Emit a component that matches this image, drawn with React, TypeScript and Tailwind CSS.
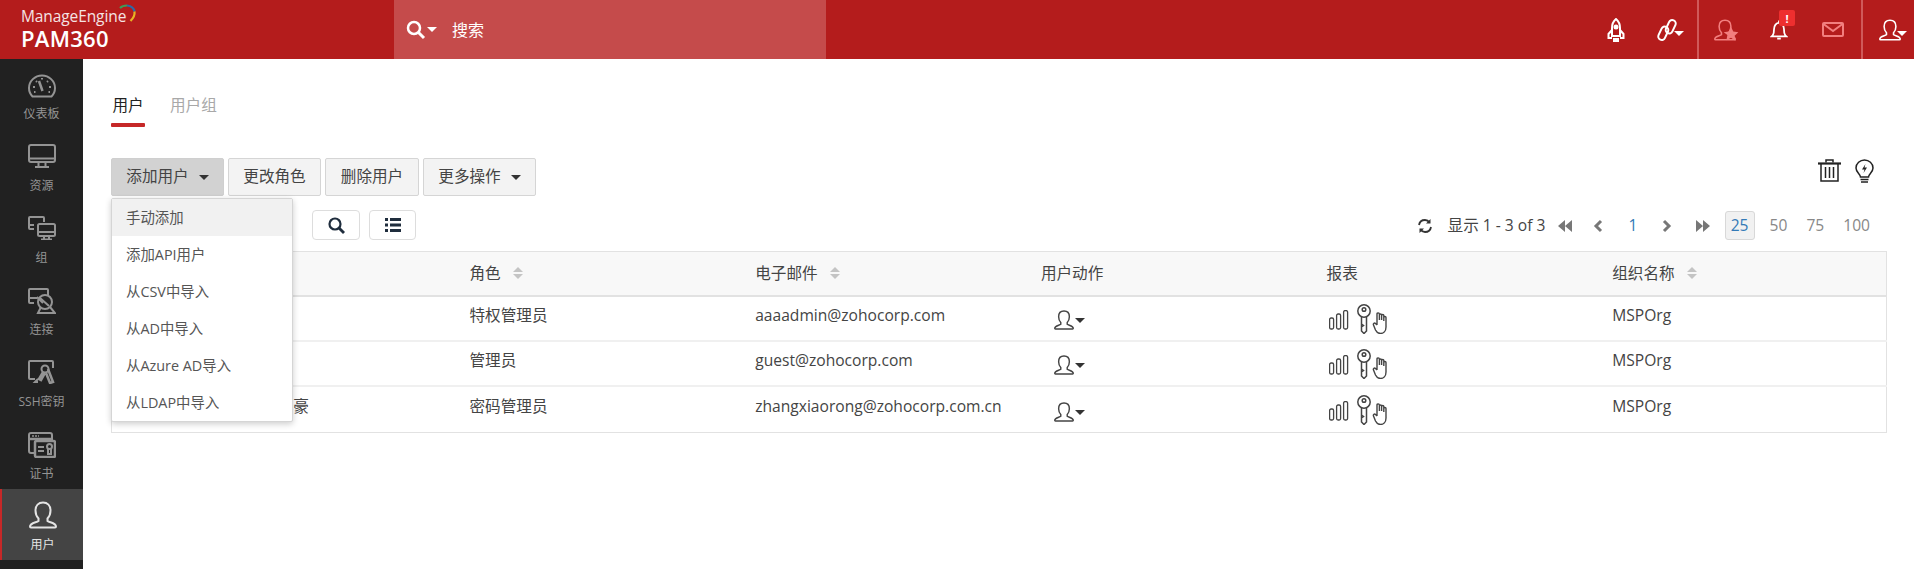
const FONT = "font-['Open_Sans','Noto_Sans_CJK_SC',sans-serif]";

function Gauge() {
  return (
    <svg width="28" height="24" viewBox="0 0 28 24" fill="none" stroke="currentColor" strokeWidth="2">
      <path d="M4.500 22.500h19c2-2 3.500-5 3.500-8.500C27 7 21 1.500 14 1.500S1 7 1 14c0 3.500 1.500 6.500 3.500 8.500z" />
      <path d="M11 7l3.500 10" strokeWidth="2.500" />
      <path d="M5 13h2M21 13h2M8 7l1 1M20 7l-1 1M14 4v1.500M6 18h1.500M20.500 18H22" />
    </svg>
  );
}

function Monitor() {
  return (
    <svg width="28" height="24" viewBox="0 0 28 24" fill="none" stroke="currentColor" strokeWidth="2">
      <rect x="1" y="1" width="26" height="17" rx="2" />
      <path d="M1 14.500h26M10.500 18v4M17.500 18v4M7 23h14" />
    </svg>
  );
}

function Group() {
  return (
    <svg width="28" height="24" viewBox="0 0 28 24" fill="none" stroke="currentColor" strokeWidth="2">
      <path d="M6 13H2a1 1 0 0 1-1-1V2a1 1 0 0 1 1-1h13a1 1 0 0 1 1 1v4" />
      <path d="M1 9h5" />
      <rect x="10" y="8" width="17" height="12" rx="1.500" />
      <path d="M10 16h17M16 20v3M21 20v3M13 23.500h11" />
    </svg>
  );
}

function Connect() {
  return (
    <svg width="28" height="26" viewBox="0 0 28 26" fill="none" stroke="currentColor" strokeWidth="2">
      <path d="M6 15H2a1 1 0 0 1-1-1V2a1 1 0 0 1 1-1h17a1 1 0 0 1 1 1v5" />
      <path d="M1 10h8M9 9l6 6" />
      <circle cx="17" cy="14" r="7" />
      <path d="M13 19l-3 6h17l-5-6M12 10l9 8" />
    </svg>
  );
}

function SshKey() {
  return (
    <svg width="28" height="24" viewBox="0 0 28 24" fill="none" stroke="currentColor" strokeWidth="2">
      <path d="M7 19H2a1 1 0 0 1-1-1V2a1 1 0 0 1 1-1h22a1 1 0 0 1 1 1v6" />
      <path d="M10 19l-3 3h3" />
      <circle cx="17" cy="9" r="3.500" />
      <path d="M15 12l-4 7 2 1 4-7M20 9l5 13-3 1-4-10" strokeWidth="2.500" />
    </svg>
  );
}

function Certificate() {
  return (
    <svg width="28" height="26" viewBox="0 0 28 26" fill="none" stroke="currentColor" strokeWidth="2">
      <path d="M6 21H3a2 2 0 0 1-2-2V3a2 2 0 0 1 2-2h19a2 2 0 0 1 2 2v5" />
      <path d="M1 7h23" strokeWidth="2.500" />
      <path d="M4 4h7" strokeDasharray="2 1" strokeWidth="1.500" />
      <rect x="7" y="9" width="20" height="16" rx="1.500" strokeWidth="2.500" />
      <path d="M10 15h6M10 19h6" />
      <circle cx="21.500" cy="14.500" r="2.500" />
      <path d="M20 17v5h3v-5" />
    </svg>
  );
}

function UserShape({ size = 28, stroke = 2 }: { size?: number; stroke?: number }) {
  return (
    <svg width={size} height={size} viewBox="0 0 28 28" fill="none" stroke="currentColor" strokeWidth={stroke}>
      <path d="M9.500 17.500c-2-2-3-5-3-8C6.500 4.500 9.500 1.500 14 1.500s7.500 3 7.500 8c0 3-1 6-3 8v2.500c2 1.500 8.500 2 8.500 5.500 0 .8-.5 1-1 1H2c-.5 0-1-.2-1-1 0-3.500 6.500-4 8.500-5.500z" />
    </svg>
  );
}

function Caret({ className = "border-t-[#333]" }: { className?: string }) {
  return <span className={`inline-block h-0 w-0 border-x-[5px] border-t-[5px] border-x-transparent ${className}`} />;
}

function Sort() {
  return (
    <span className="ml-[12px] inline-flex flex-col gap-[2px]">
      <span className="h-0 w-0 border-x-[5px] border-b-[5px] border-x-transparent border-b-[#c4c4c4]" />
      <span className="h-0 w-0 border-x-[5px] border-t-[5px] border-x-transparent border-t-[#c4c4c4]" />
    </span>
  );
}

function ReportIcons() {
  return (
    <div className="flex items-start text-[#444]">
      <svg width="20" height="20" viewBox="0 0 20 20" fill="none" stroke="currentColor" strokeWidth="1.300" className="mt-[6px] ml-[2px]">
        <rect x="0.600" y="8" width="4" height="11" rx="1.500" />
        <rect x="7.600" y="4" width="4" height="15" rx="1.500" />
        <rect x="14.600" y="0.600" width="4" height="18.400" rx="1.500" />
      </svg>
      <svg width="14" height="30" viewBox="0 0 14 30" fill="none" stroke="currentColor" strokeWidth="1.500" className="ml-[8px]">
        <circle cx="7" cy="7" r="6.200" />
        <circle cx="7" cy="5.500" r="1.800" />
        <path d="M4.500 13v14L7 29.500 9.500 27V13M4.500 20l2 1.500-2 1.500" />
      </svg>
      <svg width="17" height="22" viewBox="0 0 16 22" fill="none" stroke="currentColor" strokeWidth="1.400" className="mt-[8px]">
        <path d="M4 13V2c0-1.500 2.400-1.500 2.400 0v6M6.400 8V3c0-1.300 2.200-1.300 2.200 0v5M8.600 8V3.500c0-1.300 2.200-1.300 2.200 0V9M10.800 9V5.500c0-1.300 2.200-1.300 2.200 0V15c0 4-2.500 6.500-5.500 6.500-2.500 0-4-1.500-5-3.500L.5 13c-.6-1.500 1-2.500 2-1.500L4 13" transform="translate(1.500 0)" />
      </svg>
    </div>
  );
}

const NAV = [
  { label: "仪表板", icon: <Gauge /> },
  { label: "资源", icon: <Monitor /> },
  { label: "组", icon: <Group /> },
  { label: "连接", icon: <Connect /> },
  { label: "SSH密钥", icon: <SshKey /> },
  { label: "证书", icon: <Certificate /> },
];

const MENU = ["手动添加", "添加API用户", "从CSV中导入", "从AD中导入", "从Azure AD导入", "从LDAP中导入"];

const ROWS = [
  { name: "", role: "特权管理员", email: "aaaadmin@zohocorp.com" },
  { name: "", role: "管理员", email: "guest@zohocorp.com" },
  { name: "张小豪", role: "密码管理员", email: "zhangxiaorong@zohocorp.com.cn" },
];

const COLS = ["角色", "电子邮件", "用户动作", "报表", "组织名称"];

function Header() {
  return (
    <header className="flex h-[59px] items-stretch bg-[#b41c1c] text-white">
      <div className="relative w-[394px] pl-[21px]">
        <div className="pt-[7px] text-[15.500px] leading-[19px] font-medium tracking-[-0.100px] text-[#f5e3e3]">ManageEngine</div>
        <div className="text-[22px] leading-[24px] font-semibold tracking-[0.300px]">PAM360</div>
        <svg width="18" height="20" viewBox="0 0 18 20" fill="none" strokeWidth="2.200" className="absolute top-[4px] left-[119px]">
          <path d="M1 4C3 2 5 1.500 8 1.500" stroke="#3f9b57" />
          <path d="M8 1.500c4 .5 7 3 7.500 6" stroke="#2b6aa8" />
          <path d="M15.500 7.500c.5 3.500-1.500 7-4 9.500" stroke="#e8b323" />
        </svg>
      </div>
      <div className="flex w-[432px] items-center bg-[#c54b4b] pl-[12px]">
        <svg width="20" height="20" viewBox="0 0 20 20" fill="none" stroke="currentColor" strokeWidth="2.500">
          <circle cx="8" cy="8" r="6" />
          <path d="M12.500 12.500L18 18" strokeWidth="3" />
        </svg>
        <Caret className="ml-[1px] border-t-white" />
        <span className="ml-[15px] text-[16px]">搜索</span>
      </div>
      <div className="flex-1" />
      <div className="flex w-[130px] items-center">
        <svg width="18" height="24" viewBox="0 0 18 24" fill="none" stroke="currentColor" strokeWidth="2" className="ml-[40px]">
          <path d="M9 1c3 2.500 4 6 4 9v8H5v-8c0-3 1-6.500 4-9z" />
          <path d="M5 12l-3.500 4v4H5M13 12l3.500 4v4H13M7 21h4v2H7z" />
          <circle cx="9" cy="9" r="1.500" fill="currentColor" />
        </svg>
        <svg width="20" height="24" viewBox="0 0 20 24" fill="none" stroke="currentColor" strokeWidth="2" className="ml-[32px]">
          <g transform="rotate(25 10 12)">
            <rect x="8.500" y="0.500" width="7" height="14" rx="3.500" />
            <rect x="4.500" y="9.500" width="7" height="14" rx="3.500" />
          </g>
        </svg>
        <Caret className="mt-[8px] -ml-[3px] border-t-white" />
      </div>
      <div className="w-[2px] bg-[#d05a5a]" />
      <div className="relative flex w-[162px] items-center">
        <span className="ml-[15px] flex text-[#f27f7f]"><UserShape size={22} /></span>
        <svg width="16" height="16" viewBox="0 0 24 24" fill="#f27f7f" className="absolute top-[26px] left-[24px]">
          <path d="M12 1l3.400 7.200 7.600 1-5.600 5.400 1.500 7.900L12 17.700l-6.900 3.800 1.500-7.900L1 9.200l7.600-1z" />
        </svg>
        <svg width="18" height="24" viewBox="0 0 20 24" fill="none" stroke="currentColor" strokeWidth="2" className="ml-[34px]">
          <path d="M3 18c1.500-2 1.500-4 1.500-7C4.500 7 7 4 10 4s5.500 3 5.500 7c0 3 0 5 1.500 7l1 1H2zM8 21.500h4" />
          <path d="M10 1.500V4" />
        </svg>
        <div className="absolute top-[10px] left-[80px] flex h-[16px] w-[16px] items-center justify-center rounded-[2px] bg-[#ee2f2f] text-[11px] leading-none font-bold">!</div>
        <svg width="22" height="16" viewBox="0 0 22 16" fill="none" stroke="#f27f7f" strokeWidth="2" className="ml-[34px]">
          <rect x="1" y="1" width="20" height="13" rx="1" />
          <path d="M1.500 2L11 9l9.500-7" />
        </svg>
      </div>
      <div className="w-[2px] bg-[#d05a5a]" />
      <div className="relative flex w-[51px] items-center pl-[16px]">
        <UserShape size={22} />
        <Caret className="absolute top-[31px] right-[7px] border-t-white" />
      </div>
    </header>
  );
}

function Sidebar() {
  return (
    <aside className="flex w-[83px] shrink-0 flex-col bg-[#212121] text-[#949494]">
      {NAV.map((n, i) => (
        <div key={n.label} className={`flex h-[72px] flex-col items-center ${i === 0 ? "-mt-[2px] pt-[17px]" : "pt-[15px]"}`}>
          <div className="flex h-[28px] items-start">{n.icon}</div>
          <div className={`text-[12px] leading-[16px] ${i === 0 ? "mt-[4px]" : "mt-[6px]"}`}>{n.label}</div>
        </div>
      ))}
      <div className="flex h-[71px] flex-col items-center border-l-[2px] border-[#c62828] bg-[#444] pt-[12px] text-[#e4e4e4]">
        <UserShape />
        <div className="mt-[8px] text-[12px] leading-[16px]">用户</div>
      </div>
    </aside>
  );
}

function Btn({ label, active, w, caret }: { label: string; active?: boolean; w: string; caret?: boolean }) {
  return (
    <button className={`flex h-[38px] items-center justify-center gap-[10px] rounded-[2px] border text-[15.600px] text-[#444] ${w} ${active ? "border-[#cfcfcf] bg-[#d2d2d2]" : "border-[#d5d5d5] bg-[#f3f3f3]"}`}>
      {label}
      {caret && <Caret />}
    </button>
  );
}

function Pager() {
  return (
    <div className="flex h-[31px] items-center justify-end pr-[17px] text-[15.600px] text-[#555]">
      <svg width="16" height="16" viewBox="0 0 16 16" fill="none" stroke="#333" strokeWidth="1.800">
        <path d="M2 7c.5-3 3-5 6-5 2 0 3.500 1 4.500 2.500M14 9c-.5 3-3 5-6 5-2 0-3.500-1-4.500-2.500" />
        <path d="M13.500 1v4.500H9M2.500 15v-4.500H7" fill="#333" stroke="none" />
      </svg>
      <span className="ml-[15px] w-[110px] text-[#444]">显示 1 - 3 of 3</span>
      <svg width="14" height="12" viewBox="0 0 14 12" fill="#777"><path d="M7 0v12L0 6zM14 0v12L7 6z" /></svg>
      <svg width="10" height="14" viewBox="0 0 10 14" fill="none" stroke="#777" strokeWidth="3" className="ml-[21px]"><path d="M8 2L3 7l5 5" /></svg>
      <span className="ml-[26px] w-[7px] text-center text-[#337ab7]">1</span>
      <svg width="10" height="14" viewBox="0 0 10 14" fill="none" stroke="#777" strokeWidth="3" className="ml-[26px]"><path d="M2 2l5 5-5 5" /></svg>
      <svg width="14" height="12" viewBox="0 0 14 12" fill="#777" className="ml-[24px]"><path d="M0 0v12l7-6zM7 0v12l7-6z" /></svg>
      <span className="ml-[15px] flex h-[29px] w-[30px] items-center justify-center rounded-[3px] border border-[#d8d8d8] bg-[#f1f1f1] text-[#337ab7]">25</span>
      <span className="ml-[15px] text-[#888]">50</span>
      <span className="ml-[19px] text-[#888]">75</span>
      <span className="ml-[19px] text-[#888]">100</span>
    </div>
  );
}

function UsersTable() {
  return (
    <table className="mt-[10px] w-full table-fixed border-collapse border border-[#e2e2e2] text-[15.600px] text-[#444]">
      <thead>
        <tr className="h-[44px] border-b-[2px] border-[#e2e2e2] bg-[#f8f8f8]">
          <th className="w-[343px]" />
          {COLS.map((c, i) => (
            <th key={c} className={`px-[15px] text-left font-normal ${i < 4 ? "w-[285.700px]" : ""}`}>
              <span className="inline-flex items-center">
                {c}
                {(i < 2 || i === 4) && <Sort />}
              </span>
            </th>
          ))}
        </tr>
      </thead>
      <tbody>
        {ROWS.map((r, idx) => {
          const pad = idx === 2 ? "pt-[8px]" : "pt-[7px]";
          return (
            <tr key={r.email} className={`${idx < 2 ? "h-[45px] border-b-[2px] border-[#f0f0f0]" : "h-[47px]"}`}>
              <td className={`px-[15px] pl-[150px] align-top ${pad}`}>{r.name}</td>
              <td className={`px-[15px] align-top ${pad}`}>{r.role}</td>
              <td className={`px-[15px] align-top ${pad}`}>{r.email}</td>
              <td className={`px-[15px] align-top ${idx === 2 ? "pt-[15px]" : "pt-[13px]"}`}>
                <div className="flex items-center pl-[13px] text-[#444]">
                  <UserShape size={20} stroke={2} />
                  <Caret className="mt-[2px] ml-[1px] border-t-[#333]" />
                </div>
              </td>
              <td className={`px-[15px] align-top ${pad}`}><ReportIcons /></td>
              <td className={`px-[15px] align-top ${pad}`}>MSPOrg</td>
            </tr>
          );
        })}
      </tbody>
    </table>
  );
}

export default function App() {
  return (
    <div className={`flex h-[569px] flex-col overflow-hidden bg-white ${FONT}`}>
      <Header />
      <div className="flex flex-1">
        <Sidebar />
        <main className="relative flex-1 pr-[27px] pl-[28px]">
          <div className="flex gap-[25px] pt-[34px] text-[15.600px]">
            <div className="flex h-[34px] flex-col items-center text-[#222]">
              <span className="leading-[24px]">用户</span>
              <span className="mt-[6px] h-[4px] w-[34px] rounded-[1px] bg-[#c62828]" />
            </div>
            <span className="leading-[24px] text-[#a8a8a8]">用户组</span>
          </div>
          <div className="mt-[31px] flex items-start justify-between">
            <div className="flex gap-[4px]">
              <Btn label="添加用户" active w="w-[113px]" caret />
              <Btn label="更改角色" w="w-[93px]" />
              <Btn label="删除用户" w="w-[94px]" />
              <Btn label="更多操作" w="w-[113px]" caret />
            </div>
            <div className="flex items-start gap-[14px] pt-[1px] pr-[13px] text-[#222]">
              <svg width="23" height="23" viewBox="0 0 23 23" fill="none" stroke="currentColor" strokeWidth="1.500">
                <path d="M0 4.500h23" strokeWidth="2.200" />
                <path d="M3 5v17h17V5M7.500 8v11M11.500 8v11M15.500 8v11M8 3.500V1h7v2.500" />
              </svg>
              <svg width="19" height="25" viewBox="0 0 19 25" fill="none" stroke="currentColor" strokeWidth="1.500">
                <path d="M5.500 18c0-3-4.500-4.500-4.500-9C1 4.500 5 1 9.500 1S18 4.500 18 9c0 4.500-4.500 6-4.500 9z" />
                <path d="M10.500 5L7 10.500h2.500L8.500 14 12 8.500H9.500z" fill="currentColor" stroke="none" />
                <path d="M5.500 20.500h8M6 23h7" />
              </svg>
            </div>
          </div>
          <div className="relative mt-[14px]">
            <div className="absolute top-0 left-[201px] flex gap-[9px]">
              <button className="flex h-[30px] w-[48px] items-center justify-center rounded-[4px] border border-[#ddd] bg-white text-[#1f2d3d]">
                <svg width="17" height="17" viewBox="0 0 17 17" fill="none" stroke="currentColor" strokeWidth="2.200">
                  <circle cx="7" cy="7" r="5.500" />
                  <path d="M11 11l5 5" strokeWidth="2.800" />
                </svg>
              </button>
              <button className="flex h-[30px] w-[47px] items-center justify-center rounded-[4px] border border-[#ddd] bg-white text-[#1f2d3d]">
                <svg width="16" height="14" viewBox="0 0 16 14" fill="currentColor">
                  <path d="M0 0h3v3H0zM5 0h11v3H5zM0 5.500h3v3H0zM5 5.500h11v3H5zM0 11h3v3H0zM5 11h11v3H5z" />
                </svg>
              </button>
            </div>
            <Pager />
          </div>
          <UsersTable />
          <div className="absolute top-[139px] left-[28px] w-[182px] rounded-[2px] border border-[#d5d5d5] bg-white py-0 text-[14.400px] text-[#555] shadow-[0_2px_6px_rgba(0,0,0,0.2)]">
            {MENU.map((m, i) => (
              <div key={m} className={`flex h-[37px] items-center pl-[14px] ${i === 0 ? "bg-[#f1f1f1]" : ""}`}>{m}</div>
            ))}
          </div>
        </main>
      </div>
    </div>
  );
}
